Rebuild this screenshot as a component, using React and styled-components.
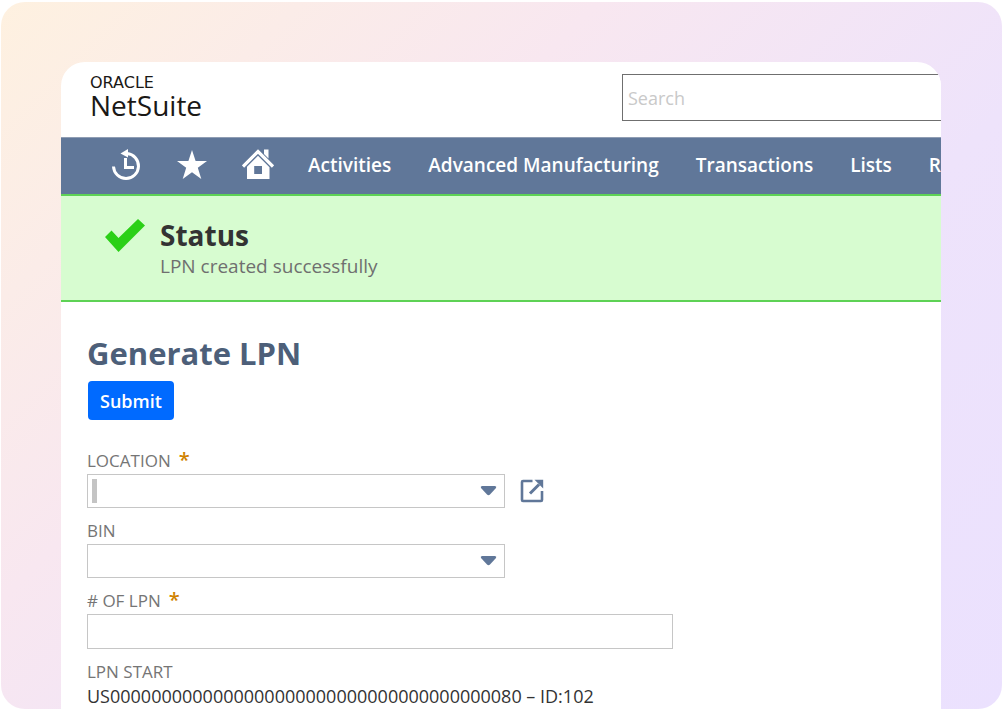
import React, { useState } from 'react';
import styled, { createGlobalStyle } from 'styled-components';

const GlobalStyle = createGlobalStyle`
	* {
		box-sizing: border-box;
	}
	body {
		margin: 0;
		background: #ffffff;
		font-family: "Open Sans", "Noto Sans", sans-serif;
	}
`;

const Frame = styled.div`
	height: calc(100vh - 2px);
	margin: 2px 1px 0;
	padding: 60px 61px 0 60px;
	border-radius: 24px;
	background: linear-gradient(135deg, #fef1e0 0%, #f8e7f0 35%, #eee3fb 65%, #ebe1fe 100%);
	overflow: hidden;
`;

const Window = styled.div`
	height: 100%;
	border-radius: 24px 24px 0 0;
	background: #ffffff;
	overflow: hidden;
`;

const Header = styled.header`
	display: flex;
	justify-content: space-between;
	height: 75px;
	padding: 12px 0 0 29px;
`;

const Logo = styled.a`
	color: #1a1816;
	text-decoration: none;
`;

const Oracle = styled.div`
	font-family: "DejaVu Sans", sans-serif;
	font-size: 16px;
	line-height: 18px;
`;

const NetSuite = styled.div`
	font-size: 28px;
	line-height: 26px;
`;

const SearchInput = styled.input`
	width: 319px;
	height: 47px;
	padding: 0 5px;
	border: 1px solid #6f6f6f;
	border-right: 0;
	border-radius: 0;
	font-family: inherit;
	font-size: 18px;
	color: #333333;
	outline: none;
	&::placeholder {
		color: #c9c9c9;
		opacity: 1;
	}
`;

const Nav = styled.nav`
	display: flex;
	align-items: center;
	gap: 37px;
	height: 57px;
	padding: 0 0 2px 49px;
	background: #607799;
	border-top: 1px solid #8f9db3;
`;

const NavIcons = styled.div`
	display: flex;
	gap: 34px;
	margin-right: -3px;
`;

const NavLink = styled.a`
	flex: none;
	color: #ffffff;
	font-size: 19px;
	font-weight: 600;
	line-height: 32px;
	text-decoration: none;
	white-space: nowrap;
	svg {
		display: block;
	}
`;

const StatusBar = styled.div`
	display: flex;
	gap: 14px;
	height: 108px;
	padding: 22px 43px;
	background: #d7fcd0;
	border-top: 2px solid #5ed255;
	border-bottom: 2px solid #5ed255;
`;

const StatusTitle = styled.div`
	color: #333333;
	font-size: 28px;
	font-weight: 700;
	line-height: 34px;
`;

const StatusText = styled.div`
	color: #6f6f6f;
	font-size: 19px;
	line-height: 28px;
`;

const Content = styled.main`
	padding: 31px 26px;
`;

const Title = styled.h1`
	margin: 0 0 8px;
	color: #4d5f79;
	font-size: 31px;
	font-weight: 700;
	line-height: 40px;
`;

const SubmitButton = styled.button`
	height: 39px;
	margin: 0 0 28px 1px;
	padding: 0 12px;
	border: 0;
	border-radius: 4px;
	background: #006aff;
	color: #ffffff;
	font-family: inherit;
	font-size: 18px;
	font-weight: 600;
	cursor: pointer;
`;

const Field = styled.div`
	margin-bottom: 10px;
`;

const Label = styled.label`
	display: flex;
	gap: 8px;
	color: #757575;
	font-size: 17px;
	line-height: 26px;
	text-transform: uppercase;
`;

const Required = styled.span`
	color: #d08200;
	font-size: 20px;
	font-weight: 600;
	line-height: 24px;
`;

const Row = styled.div`
	display: flex;
	align-items: center;
	gap: 15px;
`;

const SelectWrap = styled.div`
	position: relative;
	width: 418px;
	svg {
		position: absolute;
		top: 11px;
		right: 8px;
		pointer-events: none;
	}
`;

const Select = styled.select`
	display: block;
	width: 100%;
	height: 34px;
	padding: 0 32px 0 12px;
	border: 1px solid #c6c6c6;
	border-radius: 0;
	background: #ffffff;
	font-family: inherit;
	font-size: 18px;
	appearance: none;
`;

const Caret = styled.span`
	position: absolute;
	top: 5px;
	left: 5px;
	width: 5px;
	height: 24px;
	background: #c4c4c4;
`;

const TextInput = styled.input`
	display: block;
	width: 586px;
	max-width: 100%;
	height: 35px;
	padding: 0 8px;
	border: 1px solid #c6c6c6;
	border-radius: 0;
	font-family: inherit;
	font-size: 18px;
`;

const OpenLink = styled.a`
	svg {
		display: block;
	}
`;

const Output = styled.output`
	display: block;
	color: #333333;
	font-size: 18px;
	line-height: 22px;
`;

const HistoryIcon = () => (
	<svg width="32" height="32" viewBox="0 0 32 32" fill="none" stroke="#ffffff">
		<path d="M17 4.500 A12.500 12.500 0 1 1 3.500 17.500" strokeWidth="3" />
		<path d="M10.500 4.500 L18 0 V8.500 Z" fill="#ffffff" stroke="none" />
		<path d="M15.500 9 V18.500 H24" strokeWidth="3" />
	</svg>
);

const StarIcon = () => (
	<svg width="32" height="32" viewBox="0 0 32 32" fill="#ffffff">
		<path d="M16 1 L19.600 12 H31 L21.800 18.800 L25.300 30 L16 23.200 L6.700 30 L10.200 18.800 L1 12 H12.400 Z" />
	</svg>
);

const HomeIcon = () => (
	<svg width="32" height="32" viewBox="0 0 32 32">
		<path d="M1 17.500 L16 2.500 L31 17.500" fill="none" stroke="#ffffff" strokeWidth="3.200" />
		<path d="M22 0.500 H26.500 V9.500 L22 5 Z" fill="#ffffff" />
		<path fillRule="evenodd" fill="#ffffff" d="M16 6.800 L27.500 18.300 V30 H5 V17.800 Z M12.200 17 V25 H20 V17 Z" />
	</svg>
);

const CheckIcon = () => (
	<svg width="42" height="36" viewBox="0 0 42 36">
		<path d="M1 19 L7.500 12.500 L14.500 20 L34 1 L41 7.500 L14.500 34 Z" fill="#2bd017" />
	</svg>
);

const ArrowIcon = () => (
	<svg width="17" height="12" viewBox="0 0 17 12">
		<path d="M2 1 H15 Q17 1.300 16 3 L10 9.500 Q8.500 11 7 9.500 L1 3 Q0 1.300 2 1 Z" fill="#607799" />
	</svg>
);

const PopoutIcon = () => (
	<svg width="24" height="24" viewBox="0 0 24 24" fill="none" stroke="#607799">
		<path d="M12.500 2 H3 Q2 2 2 3 V21 Q2 22 3 22 H21 Q22 22 22 21 V12" strokeWidth="2.600" />
		<path d="M10 14.500 L19 5.500" strokeWidth="3" />
		<path d="M14.500 0.800 H23.200 V9.500 Z" fill="#607799" stroke="none" />
	</svg>
);

const shortcuts = [
	{ name: 'Recent', icon: <HistoryIcon /> },
	{ name: 'Shortcuts', icon: <StarIcon /> },
	{ name: 'Home', icon: <HomeIcon /> },
];

const menus = ['Activities', 'Advanced Manufacturing', 'Transactions', 'Lists', 'Reports'];

export default function App() {
	const [count, setCount] = useState('');
	return (
		<>
			<GlobalStyle />
			<Frame>
				<Window>
					<Header>
						<Logo href="#">
							<Oracle>ORACLE</Oracle>
							<NetSuite>NetSuite</NetSuite>
						</Logo>
						<SearchInput type="search" placeholder="Search" aria-label="Search" />
					</Header>
					<Nav>
						<NavIcons>
							{shortcuts.map((item) => (
								<NavLink key={item.name} href="#" aria-label={item.name}>
									{item.icon}
								</NavLink>
							))}
						</NavIcons>
						{menus.map((name) => (
							<NavLink key={name} href="#">{name}</NavLink>
						))}
					</Nav>
					<StatusBar role="status">
						<CheckIcon />
						<div>
							<StatusTitle>Status</StatusTitle>
							<StatusText>LPN created successfully</StatusText>
						</div>
					</StatusBar>
					<Content>
						<Title>Generate LPN</Title>
						<SubmitButton type="button">Submit</SubmitButton>
						<Field>
							<Label htmlFor="location">Location <Required>*</Required></Label>
							<Row>
								<SelectWrap>
									<Select id="location"><option value="" /></Select>
									<Caret />
									<ArrowIcon />
								</SelectWrap>
								<OpenLink href="#" aria-label="Open location"><PopoutIcon /></OpenLink>
							</Row>
						</Field>
						<Field>
							<Label htmlFor="bin">Bin</Label>
							<SelectWrap>
								<Select id="bin"><option value="" /></Select>
								<ArrowIcon />
							</SelectWrap>
						</Field>
						<Field>
							<Label htmlFor="count"># of LPN <Required>*</Required></Label>
							<TextInput id="count" value={count} onChange={(e) => setCount(e.target.value)} />
						</Field>
						<Field>
							<Label htmlFor="start">LPN Start</Label>
							<Output id="start">US0000000000000000000000000000000000000080 – ID:102</Output>
						</Field>
					</Content>
				</Window>
			</Frame>
		</>
	);
}
